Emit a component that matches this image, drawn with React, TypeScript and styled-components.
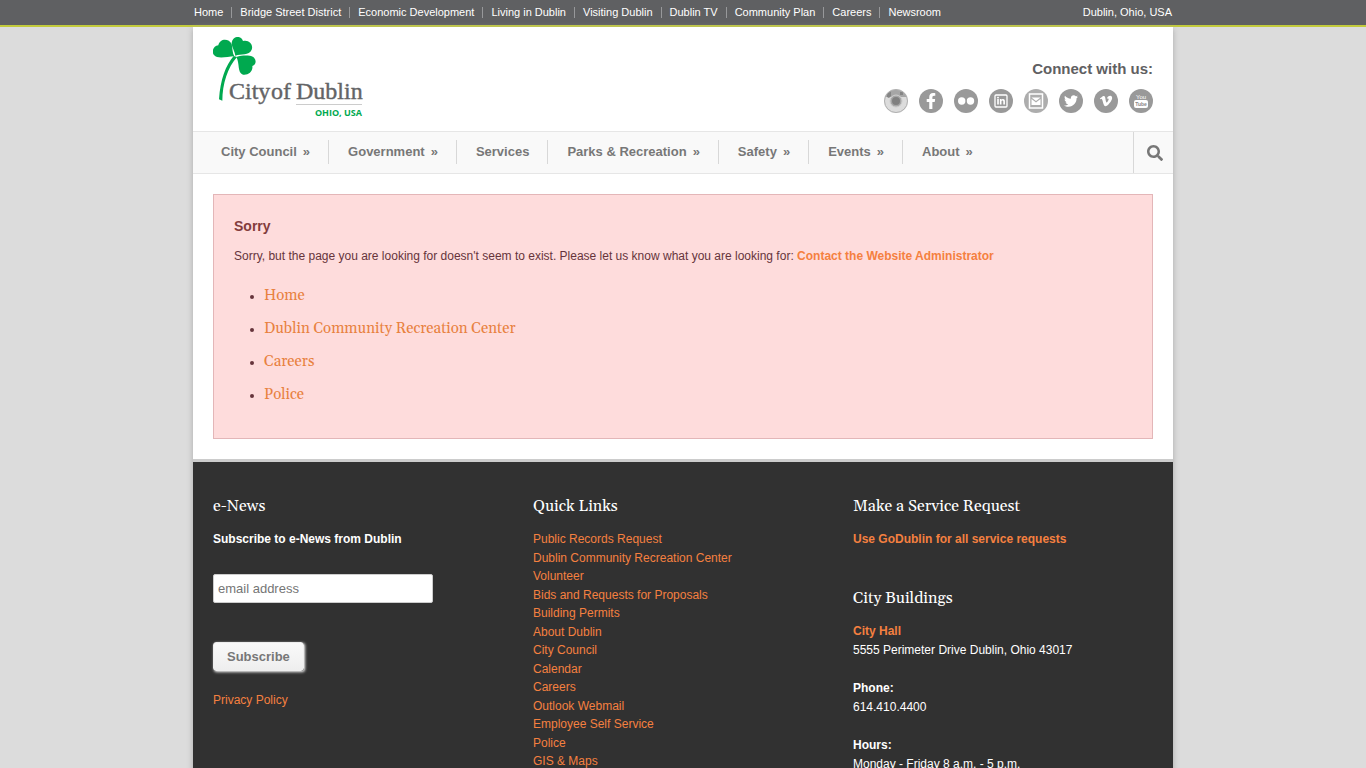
import React from "react";
import styled, { createGlobalStyle, css } from "styled-components";
import { FaFacebookF, FaLinkedinIn, FaSearch, FaTwitter, FaVimeoV } from "react-icons/fa";

const sans = '"Liberation Sans", Arial, sans-serif';
const serif = 'Georgia, Gelasio, "Liberation Serif", serif';
const orange = "#f58040";

const GlobalStyle = createGlobalStyle`
  * { box-sizing: border-box; }
  body {
    margin: 0;
    background: #dcdcdc;
    color: #666;
    font-family: ${sans};
    font-size: 12px;
    line-height: 19px;
  }
  ul { margin: 0; padding: 0; list-style: none; }
  h1, h2, p { margin: 0; }
  a { color: inherit; text-decoration: none; }
`;

const TopBar = styled.div`
  background: #5f6062;
  border-bottom: 2px solid #c3cb3c;
`;

const TopBarInner = styled.div`
  display: flex;
  justify-content: space-between;
  align-items: center;
  max-width: 980px;
  height: 25px;
  margin: 0 auto;
  padding: 0 1px;
  color: #fff;
  font-size: 11px;
  line-height: 11px;
`;

const TopLinks = styled.ul`
  display: flex;

  li + li {
    margin-left: 8px;
    padding-left: 8px;
    border-left: 1px solid #97989a;
  }
`;

const Shell = styled.div`
  max-width: 980px;
  margin: 0 auto;
  background: #fff;
  box-shadow: 0 2px 6px #aaa;
`;

const Header = styled.header`
  display: flex;
  justify-content: space-between;
  height: 104px;
  padding: 10px 20px 0;
`;

const Connect = styled.div`
  display: flex;
  flex-direction: column;
  align-items: flex-end;
  gap: 10px;
  padding-top: 22px;
`;

const ConnectTitle = styled.p`
  color: #5f6062;
  font-size: 15px;
  font-weight: bold;
  line-height: 20px;
`;

const SocialList = styled.ul`
  display: flex;
  gap: 11px;

  a, svg { display: block; }
`;

const NavBar = styled.nav`
  display: flex;
  justify-content: space-between;
  height: 43px;
  padding-left: 9px;
  background: #f9f9f9;
  border-top: 1px solid #e6e6e6;
  border-bottom: 1px solid #e6e6e6;
`;

const NavList = styled.ul`
  display: flex;
  padding-top: 8px;
`;

const NavItem = styled.li`
  height: 24px;
  padding: 0 18px 0 19px;
  color: #777;
  font-size: 13px;
  font-weight: bold;
  line-height: 24px;

  & + & { border-left: 1px solid #d8d8d8; }
`;

const Arrow = styled.span`
  margin-left: 6px;
`;

const SearchButton = styled.button`
  display: flex;
  align-items: center;
  justify-content: center;
  width: 40px;
  padding: 0 0 0 2px;
  background: none;
  border: 0;
  border-left: 1px solid #d8d8d8;
  color: #777;
`;

const Main = styled.main`
  padding: 20px;
`;

const Notice = styled.section`
  min-height: 245px;
  padding: 21px 20px 26px;
  background: #fedcdc;
  border: 1px solid #e3b6b8;
  color: #66343b;
`;

const NoticeTitle = styled.h1`
  margin-bottom: 11px;
  color: #833c3c;
  font-size: 14px;
  line-height: 20px;
`;

const StrongLink = styled.a`
  color: ${orange};
  font-weight: bold;
`;

const NoticeList = styled.ul`
  margin-top: 14px;
  padding-left: 30px;
  list-style: disc;

  li { line-height: 33px; }

  a {
    color: #e88140;
    font-family: ${serif};
    font-size: 15px;
    line-height: 20px;
  }
`;

const Footer = styled.footer`
  display: grid;
  grid-template-columns: repeat(3, 1fr);
  gap: 20px;
  padding: 34px 20px 0;
  background: #313131;
  border-top: 3px solid #ccc;
  color: #fff;
`;

const FooterTitle = styled.h2<{ $spaced?: boolean }>`
  margin-bottom: 14px;
  font-family: ${serif};
  font-size: 16px;
  font-weight: normal;
  line-height: 20px;
  ${(p) => p.$spaced && css`margin-top: 39px;`}
`;

const EmailLabel = styled.label`
  display: block;
  margin-bottom: 25px;
  font-weight: bold;
`;

const EmailInput = styled.input`
  display: block;
  width: 220px;
  height: 29px;
  padding: 0 4px;
  border: 1px solid #ccc;
  border-radius: 2px;
  font-family: ${sans};
  font-size: 13px;

  &::placeholder { color: #757575; }
`;

const SubscribeButton = styled.button`
  display: block;
  height: 29px;
  margin: 39px 0 20px;
  padding: 0 13px;
  background: linear-gradient(#fafafa, #eee);
  border: 1px solid #eee;
  border-radius: 3px;
  box-shadow: 1px 1px 3px #fff;
  color: #777;
  font-family: ${sans};
  font-size: 13px;
  font-weight: bold;
`;

const FooterLink = styled.a`
  color: ${orange};
`;

const QuickLinks = styled.ul`
  li { line-height: 18px; }
  li:nth-child(odd) { padding-bottom: 1px; }
`;

const InfoBlock = styled.p`
  margin-bottom: 19px;
`;

const Logo = () => (
  <svg width="152" height="84" viewBox="0 0 152 84" role="img" aria-label="City of Dublin, Ohio, USA">
    <g transform="scale(0.3333) translate(-14 -15)" fill="#00a94f">
      <path d="M78 73C72 64 73 50 70 36C62 18 34 18 30 40C14 42 9 60 17 69C28 82 54 74 78 73Z" />
      <path d="M81 71C80 58 70 46 70 32C73 11 99 9 104 27C122 22 136 38 130 53C122 72 98 64 81 71Z" />
      <path d="M84 75C98 70 112 70 124 71C144 73 148 97 132 102C135 119 118 131 104 128C86 122 95 94 84 75Z" />
      <path d="M76 72C52 100 36 142 32 202L42 206C42 156 58 106 86 75Z" />
    </g>
    <g fill="#636466" stroke="#636466" strokeWidth="0.4" fontFamily="Liberation Serif, serif" fontSize="24">
      <text x="16" y="62">City</text>
      <text x="58" y="62">of</text>
      <text x="83" y="62">Dublin</text>
    </g>
    <path d="M83 67.500H149" stroke="#ccc" />
    <text x="149" y="79" fill="#00a94f" textAnchor="end" fontFamily="Open Sans, sans-serif" fontSize="9" fontWeight="700">OHIO, USA</text>
  </svg>
);

const Disc = ({ color = "#999", children }: { color?: string; children: React.ReactNode }) => (
  <svg width="24" height="24" viewBox="0 0 24 24" aria-hidden="true">
    <circle cx="12" cy="12" r="12" fill={color} />
    {children}
  </svg>
);

const socials = [
  {
    name: "Instagram",
    icon: (
      <Disc color="#dcdcdc">
        <path d="M1 8A12 12 0 0 1 23 8L17 8A7 7 0 0 0 7 8Z" fill="#a6a6a6" />
        <path d="M3 5L7 2V7L5 9L3 8Z" fill="#858585" />
        <path d="M16 3H19V6H16Z" fill="#858585" />
        <circle cx="12" cy="12" r="11.500" fill="none" stroke="#b0b0b0" />
        <circle cx="12" cy="12" r="6" fill="#a6a6a6" stroke="#ccc" />
        <circle cx="12" cy="12" r="4" fill="#808080" />
      </Disc>
    ),
  },
  { name: "Facebook", icon: <Disc><FaFacebookF x="4" y="4" size={16} color="#fff" /></Disc> },
  {
    name: "Flickr",
    icon: (
      <Disc>
        <circle cx="7.700" cy="12" r="3.700" fill="#fff" />
        <circle cx="16.500" cy="12" r="3.700" fill="#fff" />
      </Disc>
    ),
  },
  {
    name: "LinkedIn",
    icon: (
      <Disc>
        <rect x="6" y="6" width="12" height="12" rx="1" fill="none" stroke="#fff" strokeWidth="1.300" />
        <FaLinkedinIn x="7.500" y="7.500" size={9} color="#fff" />
      </Disc>
    ),
  },
  {
    name: "Email",
    icon: (
      <Disc color="#adadad">
        <rect x="5.500" y="5" width="13" height="14" fill="none" stroke="#fff" strokeWidth="1.500" />
        <path d="M7.500 10L12 13.500L16.500 10V16H7.500Z" fill="#fff" />
        <path d="M7.500 8.500H16.500L12 12Z" fill="#fff" />
      </Disc>
    ),
  },
  { name: "Twitter", icon: <Disc><FaTwitter x="5" y="5" size={14} color="#fff" /></Disc> },
  { name: "Vimeo", icon: <Disc><FaVimeoV x="5" y="5" size={14} color="#fff" /></Disc> },
  {
    name: "YouTube",
    icon: (
      <Disc>
        <text x="12" y="10" fill="#fff" textAnchor="middle" fontFamily="Liberation Sans Narrow, Liberation Sans, sans-serif" fontSize="6">You</text>
        <rect x="5" y="11" width="14" height="8" rx="2" fill="#fff" />
        <text x="12" y="17" fill="#888" textAnchor="middle" fontFamily="Liberation Sans Narrow, Liberation Sans, sans-serif" fontSize="5" fontWeight="700">Tube</text>
      </Disc>
    ),
  },
];

const topLinks = [
  "Home", "Bridge Street District", "Economic Development", "Living in Dublin", "Visiting Dublin",
  "Dublin TV", "Community Plan", "Careers", "Newsroom",
];

const navItems = [
  { label: "City Council", menu: true },
  { label: "Government", menu: true },
  { label: "Services", menu: false },
  { label: "Parks & Recreation", menu: true },
  { label: "Safety", menu: true },
  { label: "Events", menu: true },
  { label: "About", menu: true },
];

const suggestions = ["Home", "Dublin Community Recreation Center", "Careers", "Police"];

const quickLinks = [
  "Public Records Request", "Dublin Community Recreation Center", "Volunteer",
  "Bids and Requests for Proposals", "Building Permits", "About Dublin", "City Council",
  "Calendar", "Careers", "Outlook Webmail", "Employee Self Service", "Police", "GIS & Maps",
];

export default function App() {
  return (
    <>
      <GlobalStyle />
      <TopBar>
        <TopBarInner>
          <TopLinks>
            {topLinks.map((t) => <li key={t}><a href="#">{t}</a></li>)}
          </TopLinks>
          <span>Dublin, Ohio, USA</span>
        </TopBarInner>
      </TopBar>
      <Shell>
        <Header>
          <a href="#"><Logo /></a>
          <Connect>
            <ConnectTitle>Connect with us:</ConnectTitle>
            <SocialList>
              {socials.map((s) => (
                <li key={s.name}><a href="#" aria-label={s.name}>{s.icon}</a></li>
              ))}
            </SocialList>
          </Connect>
        </Header>
        <NavBar>
          <NavList>
            {navItems.map((n) => (
              <NavItem key={n.label}>
                <a href="#">{n.label}{n.menu && <Arrow>»</Arrow>}</a>
              </NavItem>
            ))}
          </NavList>
          <SearchButton aria-label="Search"><FaSearch size={16} /></SearchButton>
        </NavBar>
        <Main>
          <Notice>
            <NoticeTitle>Sorry</NoticeTitle>
            <p>
              Sorry, but the page you are looking for doesn't seem to exist. Please let us know what you are looking for:{" "}
              <StrongLink href="#">Contact the Website Administrator</StrongLink>
            </p>
            <NoticeList>
              {suggestions.map((s) => <li key={s}><a href="#">{s}</a></li>)}
            </NoticeList>
          </Notice>
        </Main>
        <Footer>
          <section>
            <FooterTitle>e-News</FooterTitle>
            <form>
              <EmailLabel htmlFor="email">Subscribe to e-News from Dublin</EmailLabel>
              <EmailInput id="email" type="email" placeholder="email address" />
              <SubscribeButton type="button">Subscribe</SubscribeButton>
            </form>
            <FooterLink href="#">Privacy Policy</FooterLink>
          </section>
          <section>
            <FooterTitle>Quick Links</FooterTitle>
            <QuickLinks>
              {quickLinks.map((q) => <li key={q}><FooterLink href="#">{q}</FooterLink></li>)}
            </QuickLinks>
          </section>
          <section>
            <FooterTitle>Make a Service Request</FooterTitle>
            <StrongLink href="#">Use GoDublin for all service requests</StrongLink>
            <FooterTitle $spaced>City Buildings</FooterTitle>
            <InfoBlock>
              <StrongLink href="#">City Hall</StrongLink><br />
              5555 Perimeter Drive Dublin, Ohio 43017
            </InfoBlock>
            <InfoBlock>
              <strong>Phone:</strong><br />
              614.410.4400
            </InfoBlock>
            <InfoBlock>
              <strong>Hours:</strong><br />
              Monday - Friday 8 a.m. - 5 p.m.
            </InfoBlock>
          </section>
        </Footer>
      </Shell>
    </>
  );
}
